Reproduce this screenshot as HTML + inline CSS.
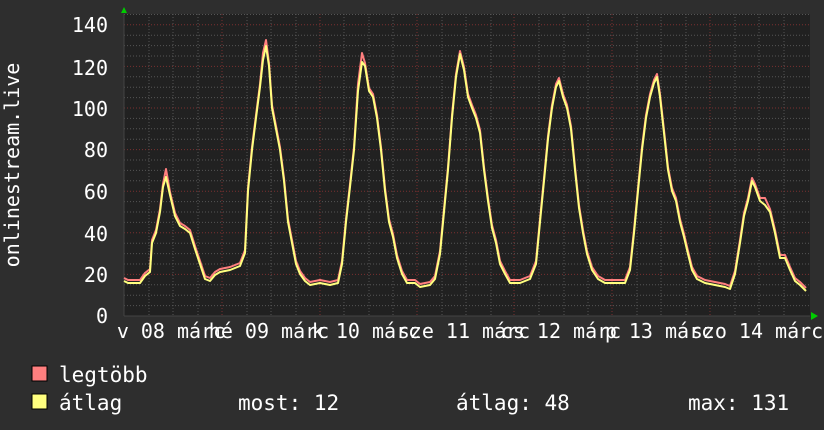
<!DOCTYPE html>
<html><head><meta charset="utf-8"><style>
body{margin:0;background:#2e2e2e;}
svg{display:block}
text{font-family:"DejaVu Sans Mono","Liberation Mono",monospace;fill:#fff;font-size:20px}
.lg{font-size:21px}
</style></head><body>
<svg width="824" height="430" xmlns="http://www.w3.org/2000/svg">
<rect width="824" height="430" fill="#2e2e2e"/>
<rect x="124" y="14" width="686" height="302" fill="#212121"/>
<g stroke="#555" stroke-width="1" stroke-dasharray="1,2">
<path d="M124 305.6H810M124 295.2H810M124 284.8H810M124 264H810M124 253.6H810M124 243.2H810M124 222.4H810M124 212H810M124 201.6H810M124 180.8H810M124 170.4H810M124 160H810M124 139.2H810M124 128.8H810M124 118.4H810M124 97.6H810M124 87.2H810M124 76.8H810M124 56H810M124 45.6H810M124 35.2H810M124 14.5H810"/>
<path d="M149 14V316M173 14V316M198 14V316M247 14V316M271 14V316M296 14V316M344 14V316M369 14V316M393 14V316M442 14V316M466 14V316M491 14V316M539 14V316M564 14V316M588 14V316M637 14V316M661 14V316M686 14V316M735 14V316M759 14V316M784 14V316"/>
</g>
<g stroke="#7a3030" stroke-width="1" stroke-dasharray="1,2">
<path d="M124 274.4H810M124 232.8H810M124 191.2H810M124 149.6H810M124 108H810M124 66.4H810M124 24.8H810"/>
<path d="M222 14V316M320 14V316M417 14V316M514 14V316M612 14V316M710 14V316"/>
</g>
<path d="M124 316H810M124 14V316" stroke="#444" stroke-width="1"/>
<polygon points="121,13 127,13 124,7" fill="#0c0"/>
<polygon points="811,312 811,320 818,316" fill="#0c0"/>
<g fill="none" stroke-linejoin="round">
<polyline transform="translate(0,-3)" stroke="#ff7f7f" stroke-width="2" points="124,281 128,283 140,283 145,276 150,272 152,243 156,233 160,212 163,187 166,172 170,195 175,216 180,226 185,229 190,233 195,249 200,264 205,279 210,281 215,275 220,272 230,270 240,266 245,253 248,191 252,150 256,118 260,87 263,56 266,43 269,66 272,108 276,129 280,150 284,181 288,222 292,243 296,264 300,274 305,281 310,285 320,283 330,285 338,283 342,264 346,222 350,187 354,150 358,87 362,56 365,66 369,91 373,97 377,118 381,150 385,191 389,222 393,237 397,258 402,274 407,283 415,283 420,287 430,285 435,279 440,254 444,212 448,170 452,118 456,77 460,54 464,70 468,97 472,108 476,118 480,133 484,170 488,201 492,228 496,243 500,264 505,274 510,283 520,283 530,279 536,264 540,222 544,181 548,139 552,108 556,87 559,81 563,97 567,108 571,129 575,170 579,208 583,233 587,254 592,270 598,279 605,283 615,283 625,283 630,270 634,233 638,191 642,150 646,118 650,97 654,83 657,77 660,97 664,133 668,170 672,191 676,201 680,222 684,237 688,254 692,270 697,279 705,283 715,285 725,287 730,289 735,274 740,243 744,216 748,201 752,181 755,187 760,201 765,201 770,212 775,233 780,258 785,258 790,270 795,281 800,285 806,291"/>
<polyline stroke="#ffff7f" stroke-width="2" points="124,281 128,283 140,283 145,276 150,272 152,243 156,233 160,212 163,187 166,177 170,195 175,216 180,226 185,229 190,233 195,249 200,264 205,279 210,281 215,275 220,272 230,270 240,266 245,253 248,191 252,150 256,118 260,87 263,60 266,46 269,66 272,108 276,129 280,150 284,181 288,222 292,243 296,264 300,274 305,281 310,285 320,283 330,285 338,283 342,264 346,222 350,187 354,150 358,91 362,62 365,66 369,91 373,97 377,118 381,150 385,191 389,222 393,237 397,258 402,274 407,283 415,283 420,287 430,285 435,279 440,254 444,212 448,170 452,118 456,77 460,54 464,70 468,97 472,108 476,118 480,133 484,170 488,201 492,228 496,243 500,264 505,274 510,283 520,283 530,279 536,264 540,222 544,181 548,139 552,108 556,87 559,81 563,97 567,108 571,129 575,170 579,208 583,233 587,254 592,270 598,279 605,283 615,283 625,283 630,270 634,233 638,191 642,150 646,118 650,97 654,83 657,77 660,97 664,133 668,170 672,191 676,201 680,222 684,237 688,254 692,270 697,279 705,283 715,285 725,287 730,289 735,274 740,243 744,216 748,201 752,181 755,187 760,201 765,205 770,212 775,233 780,258 785,258 790,270 795,281 800,285 806,291"/>
</g>
<g text-anchor="end">
<text x="108" y="32">140</text><text x="108" y="75">120</text><text x="108" y="116">100</text>
<text x="108" y="157">80</text><text x="108" y="199">60</text><text x="108" y="241">40</text>
<text x="108" y="282">20</text><text x="108" y="323">0</text>
</g>
<text transform="translate(19,165) rotate(-90)" text-anchor="middle">onlinestream.live</text>
<g text-anchor="middle">
<text x="171" y="338">v 08 márc</text><text x="269" y="338">hé 09 márc</text>
<text x="366" y="338">k 10 márc</text><text x="464" y="338">sze 11 márc</text>
<text x="561" y="338">cs 12 márc</text><text x="659" y="338">p 13 márc</text>
<text x="757" y="338">szo 14 márc</text>
</g>
<rect x="32" y="366" width="15" height="15" fill="#ff7f7f" stroke="#000"/>
<rect x="32" y="394" width="15" height="15" fill="#ffff7f" stroke="#000"/>
<text class="lg" x="59" y="382">legtöbb</text>
<text class="lg" x="59" y="410">átlag</text>
<text class="lg" x="238" y="410">most: 12</text>
<text class="lg" x="456" y="410">átlag: 48</text>
<text class="lg" x="688" y="410">max: 131</text>
</svg>
</body></html>
